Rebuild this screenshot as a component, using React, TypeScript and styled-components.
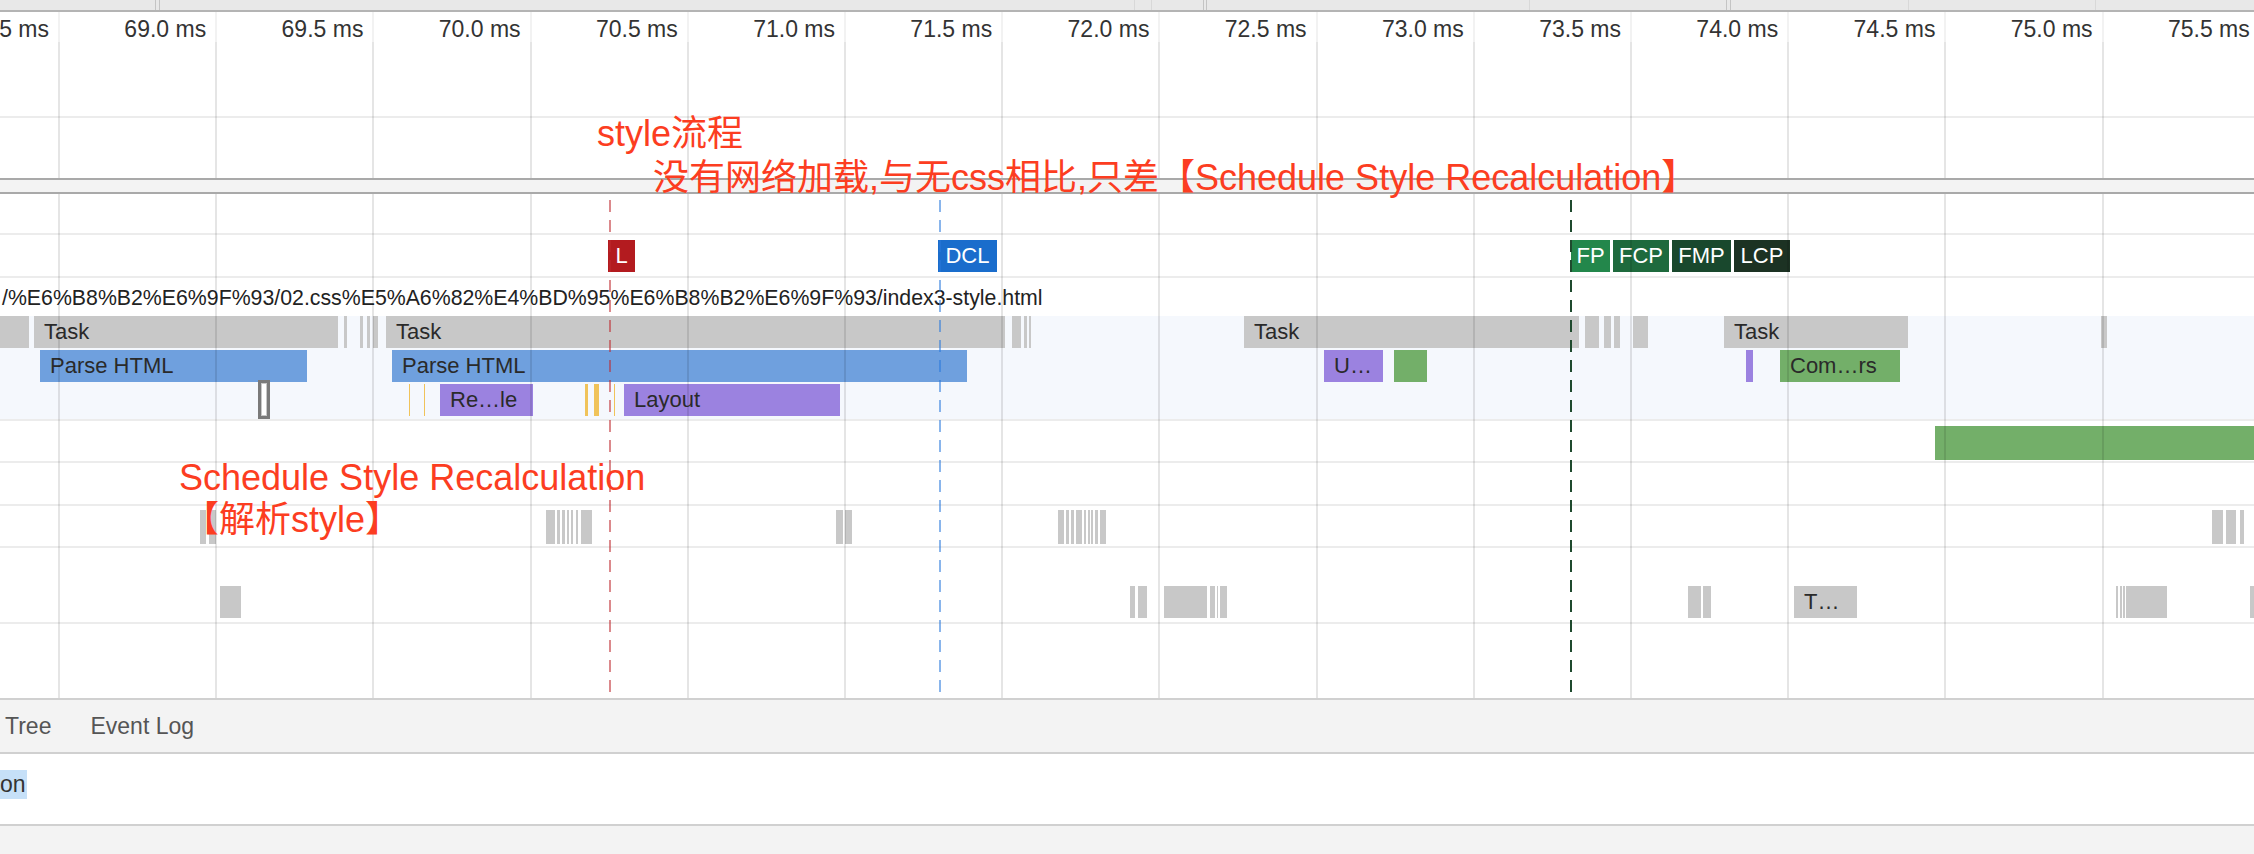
import React from "react";
import styled, { createGlobalStyle } from "styled-components";

const GlobalStyle = createGlobalStyle`
  html, body {
    margin: 0;
    padding: 0;
    background: #fff;
  }
  body {
    width: 2254px;
    height: 854px;
    overflow: hidden;
    font-family: "Liberation Sans", "Noto Sans CJK SC", sans-serif;
  }
`;

const TICK0 = 59;
const TICK = 157.2;
const ticks = Array.from({ length: 15 }, (_, i) => ({
  x: TICK0 + TICK * i,
  ms: (68.5 + 0.5 * i).toFixed(1),
}));

const COLORS = {
  task: "#c8c8c8",
  parse: "#6fa0de",
  render: "#9b82e0",
  paint: "#73af69",
  script: "#f0c35a",
};

type Kind = keyof typeof COLORS;
type BarData = [number, number, Kind, string?];

const level0: BarData[] = [
  [0, 29, "task"],
  [34, 338, "task", "Task"],
  [344, 347, "task"],
  [360, 363, "task"],
  [367, 370, "task"],
  [373, 378, "task"],
  [386, 1005, "task", "Task"],
  [1012, 1021, "task"],
  [1024, 1027, "task"],
  [1029, 1031, "task"],
  [1244, 1579, "task", "Task"],
  [1585, 1599, "task"],
  [1604, 1611, "task"],
  [1614, 1620, "task"],
  [1633, 1648, "task"],
  [1724, 1908, "task", "Task"],
  [2101, 2107, "task"],
];

const level1: BarData[] = [
  [40, 307, "parse", "Parse HTML"],
  [392, 967, "parse", "Parse HTML"],
  [1324, 1383, "render", "U…"],
  [1394, 1427, "paint"],
  [1746, 1753, "render"],
  [1780, 1900, "paint", "Com…rs"],
];

const level2: BarData[] = [
  [409, 410, "script"],
  [424, 425, "script"],
  [440, 533, "render", "Re…le"],
  [585, 588, "script"],
  [594, 599, "script"],
  [614, 615, "script"],
  [624, 840, "render", "Layout"],
];

const tickRowA: BarData[] = [
  [200, 206, "task"],
  [209, 216, "task"],
  [546, 555, "task"],
  [557, 560, "task"],
  [562, 565, "task"],
  [567, 569, "task"],
  [571, 573, "task"],
  [576, 578, "task"],
  [581, 592, "task"],
  [836, 843, "task"],
  [845, 852, "task"],
  [1058, 1064, "task"],
  [1066, 1069, "task"],
  [1071, 1074, "task"],
  [1076, 1082, "task"],
  [1084, 1086, "task"],
  [1088, 1090, "task"],
  [1091, 1093, "task"],
  [1095, 1098, "task"],
  [1100, 1106, "task"],
  [2212, 2223, "task"],
  [2226, 2236, "task"],
  [2240, 2244, "task"],
];

const tickRowB: BarData[] = [
  [220, 241, "task"],
  [1130, 1135, "task"],
  [1138, 1147, "task"],
  [1164, 1207, "task"],
  [1210, 1215, "task"],
  [1217, 1218, "task"],
  [1220, 1227, "task"],
  [1688, 1701, "task"],
  [1703, 1711, "task"],
  [1794, 1857, "task", "T…"],
  [2116, 2118, "task"],
  [2120, 2122, "task"],
  [2123, 2125, "task"],
  [2126, 2167, "task"],
  [2250, 2254, "task"],
];

const markers = [
  { label: "L", x: 608, w: 27, color: "#b31b1f" },
  { label: "DCL", x: 938, w: 59, color: "#1a6dcc" },
  { label: "FP", x: 1571, w: 39, color: "#23874b" },
  { label: "FCP", x: 1613, w: 56, color: "#1e6a3d" },
  { label: "FMP", x: 1672, w: 59, color: "#19482d" },
  { label: "LCP", x: 1734, w: 56, color: "#1c3223" },
];

const Page = styled.div`
  display: flex;
  flex-direction: column;
  width: 2254px;
  height: 854px;
`;

const TopStrip = styled.div`
  position: relative;
  flex-shrink: 0;
  height: 10px;
  background: #e8e8e8;
  border-bottom: 2px solid #b4b4b4;
`;

const StripDivider = styled.div<{ $light?: boolean }>`
  position: absolute;
  top: 0;
  bottom: 0;
  width: 1px;
  background: ${(p) => (p.$light ? "#d8d8d8" : "#c4c4c4")};
`;

const Timeline = styled.div`
  position: relative;
  flex-shrink: 0;
  height: 686px;
  display: flex;
  flex-direction: column;
  overflow: hidden;
`;

const Ruler = styled.div`
  position: relative;
  flex-shrink: 0;
  height: 30px;
`;

const RulerLine = styled.div`
  position: absolute;
  top: 0;
  bottom: 0;
  width: 2px;
  background: rgba(0, 0, 0, 0.05);
`;

const TickLabel = styled.span`
  position: absolute;
  top: 6px;
  transform: translateX(-100%);
  font-size: 23px;
  line-height: 23px;
  color: #333;
  white-space: nowrap;
`;

const Track = styled.div<{ $h: number; $bg?: string; $line?: boolean }>`
  position: relative;
  flex-shrink: 0;
  box-sizing: border-box;
  height: ${(p) => p.$h}px;
  background: ${(p) => p.$bg ?? "transparent"};
  border-bottom: ${(p) => (p.$line ? "2px solid #ececec" : "none")};
`;

const Splitter = styled.div`
  position: relative;
  z-index: 3;
  flex-shrink: 0;
  height: 12px;
  background: #f3f3f3;
  border-top: 2px solid #a9a9a9;
  border-bottom: 2px solid #a9a9a9;
`;

const Bar = styled.div<{ $kind: Kind; $top: number; $h?: number }>`
  position: absolute;
  top: ${(p) => p.$top}px;
  height: ${(p) => p.$h ?? 32}px;
  background: ${(p) => COLORS[p.$kind]};
  color: #2a2a2a;
  font-size: 22px;
  line-height: ${(p) => p.$h ?? 32}px;
  white-space: nowrap;
  overflow: hidden;
`;

const BarLabel = styled.span`
  display: block;
  padding-left: 10px;
`;

const Selection = styled.div`
  position: absolute;
  left: 258px;
  top: 64px;
  width: 12px;
  height: 39px;
  box-sizing: border-box;
  border: 3px solid #7a7a7a;
  background: #fff;
  box-shadow: inset 0 0 0 1px #c8c8c8;
`;

const Marker = styled.div<{ $color: string }>`
  position: absolute;
  top: 5px;
  height: 32px;
  background: ${(p) => p.$color};
  color: #fff;
  font-size: 22px;
  line-height: 32px;
  text-align: center;
`;

const UrlText = styled.div`
  padding: 2px 0 0 2px;
  font-size: 21.3px;
  line-height: 36px;
  color: #222;
  white-space: nowrap;
`;

const GridOverlay = styled.div`
  position: absolute;
  left: 0;
  right: 0;
  top: 30px;
  bottom: 0;
  z-index: 2;
  pointer-events: none;
`;

const GridLine = styled.div`
  position: absolute;
  top: 0;
  bottom: 0;
  width: 2px;
  background: rgba(0, 0, 0, 0.1);
`;

const DashLine = styled.div<{ $color: string }>`
  position: absolute;
  top: 188px;
  bottom: 4px;
  width: 2px;
  z-index: 4;
  background: repeating-linear-gradient(
    to bottom,
    ${(p) => p.$color} 0 12px,
    transparent 12px 20px
  );
`;

const Note = styled.div`
  position: absolute;
  z-index: 5;
  font-size: 36px;
  line-height: 36px;
  color: #fc3d21;
  white-space: nowrap;
`;

const TabBar = styled.div`
  flex-shrink: 0;
  display: flex;
  gap: 39px;
  height: 52px;
  padding-left: 5px;
  background: #f3f3f3;
  border-top: 2px solid #d0d0d0;
  border-bottom: 2px solid #d0d0d0;
`;

const Tab = styled.div`
  font-size: 23px;
  line-height: 52px;
  color: #555;
`;

const Details = styled.div`
  flex-shrink: 0;
  height: 72px;
  box-sizing: border-box;
  padding-top: 16px;
  background: #fff;
  border-bottom: 2px solid #d0d0d0;
`;

const Highlight = styled.span`
  display: inline-block;
  height: 29px;
  padding-right: 1px;
  background: #c6e0f8;
  color: #333;
  font-size: 23px;
  line-height: 29px;
`;

const Footer = styled.div`
  flex: 1;
  background: #f3f3f3;
`;

const Bars = ({ items, top, h }: { items: BarData[]; top: number; h?: number }) => (
  <>
    {items.map(([a, b, kind, label], i) => (
      <Bar key={i} $kind={kind} $top={top} $h={h} style={{ left: a, width: b - a }}>
        {label && <BarLabel>{label}</BarLabel>}
      </Bar>
    ))}
  </>
);

export default function App() {
  return (
    <Page>
      <GlobalStyle />
      <TopStrip>
        {[155, 159, 1134, 1151, 1203, 1206, 1529, 1726, 1730, 1908, 2095].map((x, i) => (
          <StripDivider key={i} $light={[1134, 1151, 1529, 1908, 2095].includes(x)} style={{ left: x }} />
        ))}
      </TopStrip>

      <Timeline>
        <Ruler>
          {ticks.map((t) => (
            <React.Fragment key={t.ms}>
              <RulerLine style={{ left: t.x - 1 }} />
              <TickLabel style={{ left: t.x - 10 }}>{t.ms} ms</TickLabel>
            </React.Fragment>
          ))}
        </Ruler>

        <Track $h={76} $line />
        <Track $h={60} />
        <Splitter />
        <Track $h={41} $line />
        <Track $h={43} $line>
          {markers.map((m) => (
            <Marker key={m.label} $color={m.color} style={{ left: m.x, width: m.w }}>
              {m.label}
            </Marker>
          ))}
        </Track>
        <Track $h={38}>
          <UrlText>
            /%E6%B8%B2%E6%9F%93/02.css%E5%A6%82%E4%BD%95%E6%B8%B2%E6%9F%93/index3-style.html
          </UrlText>
        </Track>
        <Track $h={105} $bg="#f5f8fd" $line>
          <Bars items={level0} top={0} />
          <Bars items={level1} top={34} />
          <Bars items={level2} top={68} />
          <Selection />
        </Track>
        <Track $h={42} $line>
          <Bar $kind="paint" $top={5} $h={34} style={{ left: 1935, width: 330 }} />
        </Track>
        <Track $h={43} $line />
        <Track $h={42} $line>
          <Bars items={tickRowA} top={4} h={34} />
        </Track>
        <Track $h={76} $line>
          <Bars items={tickRowB} top={38} />
        </Track>
        <Track $h={74} />

        <GridOverlay>
          {ticks.map((t) => (
            <GridLine key={t.ms} style={{ left: t.x - 1 }} />
          ))}
        </GridOverlay>

        <DashLine $color="rgba(190, 40, 45, 0.55)" style={{ left: 609 }} />
        <DashLine $color="rgba(40, 120, 220, 0.55)" style={{ left: 939 }} />
        <DashLine $color="#1f4a2e" style={{ left: 1570 }} />

        <Note style={{ left: 597, top: 104 }}>style流程</Note>
        <Note style={{ left: 653, top: 148 }}>
          没有网络加载,与无css相比,只差【Schedule Style Recalculation】
        </Note>
        <Note style={{ left: 179, top: 448 }}>Schedule Style Recalculation</Note>
        <Note style={{ left: 183, top: 490 }}>【解析style】</Note>
      </Timeline>

      <TabBar>
        <Tab>Tree</Tab>
        <Tab>Event Log</Tab>
      </TabBar>
      <Details>
        <Highlight>on</Highlight>
      </Details>
      <Footer />
    </Page>
  );
}
